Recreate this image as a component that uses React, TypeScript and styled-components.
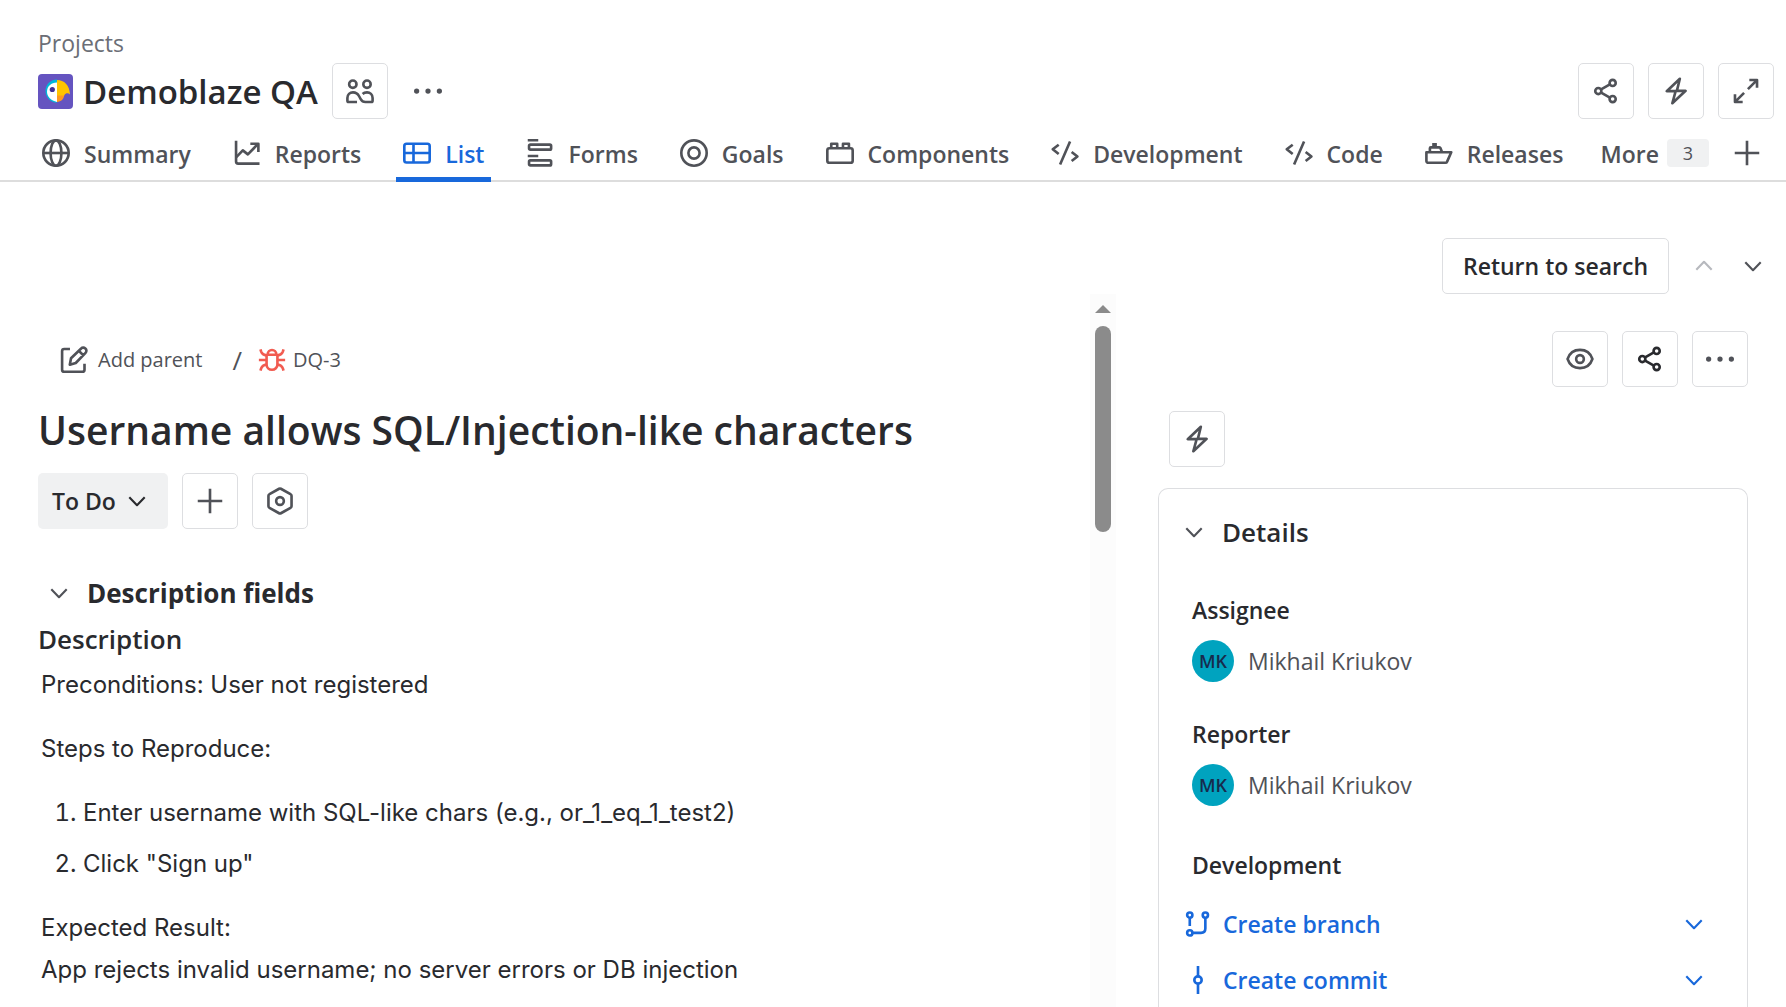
import React from "react";
import styled, { createGlobalStyle } from "styled-components";

const GlobalStyle = createGlobalStyle`
  *, *::before, *::after { box-sizing: border-box; }
  html, body, #root { height: 100%; }
  body {
    margin: 0;
    overflow: hidden;
    background: #fff;
    color: #292a2e;
    font-family: "Open Sans", "Noto Sans", sans-serif;
    font-size: 23px;
    line-height: 36px;
  }
  button { font: inherit; color: inherit; cursor: pointer; }
  h1, h2, h3, p, ol, dl, dd, dt { margin: 0; padding: 0; }
`;

const ink = "#292a2e";
const subtle = "#505258";
const line = "#dddee1";
const blue = "#1868db";

const Page = styled.div`
  display: flex;
  flex-direction: column;
  height: 100%;
`;

const Header = styled.header`
  display: flex;
  flex-direction: column;
  padding-top: 26px;
  border-bottom: 2px solid #dddddd;
`;

const Breadcrumb = styled.a`
  align-self: flex-start;
  margin-left: 38px;
  color: #6b6e76;
  line-height: 35px;
  text-decoration: none;
`;

const TitleRow = styled.div`
  display: flex;
  align-items: center;
  gap: 10px;
  margin-top: 2px;
  padding: 0 12px 0 38px;
`;

const ProjectName = styled.h1`
  padding: 2px 4px 0 0;
  font-size: 33px;
  font-weight: 600;
  line-height: 42px;
`;

const Group = styled.div<{ $push?: boolean; $tight?: boolean }>`
  display: flex;
  align-items: center;
  gap: ${(p) => (p.$tight ? "12px" : "14px")};
  margin-left: ${(p) => (p.$push ? "auto" : "0")};
`;

const IconButton = styled.button<{ $plain?: boolean; $dark?: boolean }>`
  display: grid;
  place-items: center;
  width: 56px;
  height: 56px;
  padding: 0;
  border: 1px solid ${(p) => (p.$plain ? "transparent" : line)};
  border-radius: 5px;
  background: transparent;
  color: ${(p) => (p.$dark ? ink : subtle)};
`;

const Tabs = styled.nav`
  display: flex;
  gap: 28px;
  padding: 0 25px 0 35px;
  margin-bottom: -2px;
`;

const Tab = styled.a<{ $active?: boolean }>`
  display: flex;
  align-items: center;
  gap: 14px;
  height: 63px;
  padding: 9px 7px 0;
  border-bottom: 5px solid ${(p) => (p.$active ? blue : "transparent")};
  color: ${(p) => (p.$active ? blue : subtle)};
  font-weight: 600;
  text-decoration: none;
  white-space: nowrap;
`;

const TabLabel = styled.span`
  padding-top: 2px;
`;

const MoreTab = styled.button`
  display: flex;
  align-items: center;
  gap: 8px;
  height: 63px;
  margin-left: auto;
  padding: 9px 0 5px;
  border: 0;
  background: none;
  color: ${subtle};
  font-weight: 600;
`;

const Count = styled.span`
  width: 42px;
  border-radius: 4px;
  background: #f0f1f2;
  font-size: 18px;
  font-weight: 400;
  line-height: 28px;
  text-align: center;
`;

const AddTab = styled.button`
  display: flex;
  align-items: center;
  height: 63px;
  margin-left: -4px;
  padding: 9px 0 5px;
  border: 0;
  background: none;
  color: ${subtle};
`;

const SearchBar = styled.div`
  display: flex;
  justify-content: flex-end;
  gap: 14px;
  padding: 56px 12px 0;
`;

const ReturnButton = styled.button`
  height: 56px;
  padding: 0 20px;
  border: 1px solid ${line};
  border-radius: 5px;
  background: #fff;
  font-weight: 600;
`;

const Pager = styled.div`
  display: flex;
  align-items: center;
  gap: 7px;
`;

const PagerButton = styled.button`
  display: grid;
  place-items: center;
  width: 42px;
  height: 42px;
  padding: 0;
  border: 0;
  background: none;
  color: ${subtle};
  &:disabled { color: #b7b9be; }
`;

const Main = styled.main`
  display: grid;
  grid-template-columns: minmax(0, 1090fr) 26px minmax(0, 670fr);
  flex: 1;
  min-height: 0;
`;

const Issue = styled.section`
  padding: 47px 38px 0;
  overflow: hidden;
`;

const IssuePath = styled.div`
  display: flex;
  align-items: center;
  height: 38px;
  padding-left: 22px;
  color: ${subtle};
  font-size: 20px;
`;

const PathLink = styled.a`
  display: flex;
  align-items: center;
  gap: 10px;
  color: inherit;
  text-decoration: none;
`;

const KeyLink = styled(PathLink)`
  gap: 7px;
`;

const Slash = styled.span`
  padding: 0 16px 0 30px;
  font-size: 26px;
`;

const IssueTitle = styled.h2`
  margin-top: 23px;
  font-size: 39px;
  font-weight: 600;
  line-height: 56px;
  white-space: nowrap;
`;

const Actions = styled.div`
  display: flex;
  gap: 14px;
  margin-top: 15px;
`;

const StatusButton = styled.button`
  display: flex;
  align-items: center;
  gap: 7px;
  height: 56px;
  padding: 0 17px 0 14px;
  border: 0;
  border-radius: 5px;
  background: #f0f1f2;
  color: ${ink};
  font-weight: 600;
`;

const Disclosure = styled.h3<{ $strong?: boolean }>`
  display: flex;
  align-items: center;
  font-size: 26px;
  font-weight: ${(p) => (p.$strong ? 700 : 600)};
  line-height: 42px;
`;

const DisclosureToggle = styled.button`
  display: grid;
  place-items: center;
  width: 42px;
  height: 42px;
  margin-right: 7px;
  padding: 0;
  border: 0;
  background: none;
  color: ${subtle};
`;

const DescriptionFields = styled.div`
  margin-top: 43px;
`;

const FieldHeading = styled.h3`
  margin-top: 4px;
  font-size: 26px;
  font-weight: 600;
  line-height: 42px;
`;

const RichText = styled.div`
  display: flex;
  flex-direction: column;
  gap: 22px;
  margin-top: 4px;
  padding-left: 3px;
  font-family: Inter, "Noto Sans", sans-serif;
  font-size: 24px;
  line-height: 42px;
`;

const Steps = styled.ol`
  display: flex;
  flex-direction: column;
  gap: 9px;
  && { padding-left: 42px; }
`;

const ScrollTrack = styled.div`
  display: flex;
  flex-direction: column;
  align-items: center;
  gap: 13px;
  padding-top: 11px;
  background: #fcfcfc;
`;

const ScrollArrow = styled.span`
  border: 8px solid transparent;
  border-top: 0;
  border-bottom: 8px solid #8b8b8b;
`;

const ScrollThumb = styled.span`
  width: 16px;
  height: 206px;
  border-radius: 8px;
  background: #8b8b8b;
`;

const Sidebar = styled.aside`
  display: flex;
  flex-direction: column;
  padding: 37px 38px 0 42px;
  overflow: hidden;
`;

const SidebarTools = styled(Group)`
  justify-content: flex-end;
`;

const Automation = styled.div`
  margin-top: 24px;
  padding-left: 11px;
`;

const Card = styled.section`
  flex: 1;
  margin-top: 21px;
  padding: 22px 32px 0 14px;
  border: 1px solid ${line};
  border-bottom: 0;
  border-radius: 10px 10px 0 0;
`;

const Fields = styled.dl`
  padding: 40px 0 0 19px;
  dt {
    font-weight: 600;
    line-height: 35px;
  }
`;

const Person = styled.dd`
  display: flex;
  align-items: center;
  gap: 14px;
  margin: 12px 0 35px;
  color: ${subtle};
  line-height: 42px;
`;

const Initials = styled.span`
  width: 42px;
  height: 42px;
  border-radius: 50%;
  background: #00a3bf;
  color: #172b4d;
  font-size: 18px;
  font-weight: 600;
  line-height: 42px;
  text-align: center;
`;

const DevTerm = styled.dt`
  padding-top: 7px;
`;

const DevList = styled.div`
  margin-top: 13px;
`;

const DevRow = styled.dd`
  display: flex;
  align-items: center;
  justify-content: space-between;
  height: 56px;
  margin-left: -8px;
  color: ${blue};
`;

const DevLink = styled.a`
  display: flex;
  align-items: center;
  gap: 11px;
  color: inherit;
  font-weight: 600;
  text-decoration: none;
`;

const DevToggle = styled(PagerButton)`
  color: inherit;
`;

const Svg = styled.svg`
  display: block;
  flex: none;
  overflow: visible;
`;

const shapes = {
  globe: (
    <>
      <circle cx="8" cy="8" r="7.25" />
      <ellipse cx="8" cy="8" rx="3.1" ry="7.25" />
      <path d="M.75 8h14.5" />
    </>
  ),
  reports: (
    <>
      <path d="M1.75 1v11.9c0 .7.5 1.2 1.2 1.2h12.2" />
      <path d="M1.9 10.4l3.7-3.9 2.9 2.3 5.8-6" />
      <path d="M9.9 2.7h4.6v4.7" />
    </>
  ),
  list: (
    <>
      <rect x=".75" y="2.7" width="14.5" height="10.7" rx="1.3" />
      <path d="M.75 8h14.5M6 2.7v10.7" />
    </>
  ),
  forms: (
    <>
      <path d="M1 .7h6M1 9.7h6" />
      <rect x="1.75" y="3.2" width="12.6" height="2.9" rx=".7" />
      <rect x="1.75" y="12.2" width="12.6" height="2.9" rx=".7" />
    </>
  ),
  goals: (
    <>
      <circle cx="8" cy="8" r="7.25" />
      <circle cx="8" cy="8" r="3.2" />
    </>
  ),
  components: (
    <>
      <rect x=".75" y="5.3" width="14.5" height="8.3" rx="1.2" />
      <path d="M3 5V2.7h3.4V5M9.7 5V2.7h3.4V5" />
    </>
  ),
  code: (
    <path d="M4.4 3.3L1 5.9l3.4 2.7M10.9 1.4L5.2 14.6M11.8 7.4l3.3 2.6-3.3 2.6" />
  ),
  releases: (
    <>
      <path d="M.8 7.6h14.2l-2.3 5.2c-.2.5-.6.8-1.1.8H1.9c-.6 0-1.1-.5-1.1-1.1z" />
      <path d="M2.8 7.4V5.3c0-.3.2-.5.5-.5h4.9c.3 0 .5.1.6.4l.9 2.2" />
      <path d="M4.1 4.5V2.3h2.7v2.2z" fill="currentColor" stroke="none" />
    </>
  ),
  plus: <path d="M8 1v14M1 8h14" />,
  share: (
    <>
      <circle cx="11.8" cy="3.4" r="1.75" />
      <circle cx="3.6" cy="8" r="1.75" />
      <circle cx="11.8" cy="12.6" r="1.75" />
      <path d="M5.2 7.1l5-2.9M5.2 8.9l5 2.9" />
    </>
  ),
  bolt: <path d="M10.2 1L2.7 8.1h5.1L5.9 15l7.6-7.1H8.5z" />,
  expand: (
    <>
      <path d="M9.1 6.9l5-5M9.9 1.7h4.4v4.5" />
      <path d="M6.9 9.1l-5 5M6.1 14.3H1.7V9.8" />
    </>
  ),
  people: (
    <>
      <circle cx="3.9" cy="4.1" r="2.1" />
      <circle cx="12" cy="4.1" r="2.1" />
      <path d="M6.3 14.25H1.5c-.4 0-.7-.3-.7-.7V12c0-1.9 1.4-3.2 3.2-3.2 1.9 0 2.8.9 3.5 2.2l.9 1.6c.6 1.1 1.4 1.65 2.7 1.65h3.4c.4 0 .7-.3.7-.7V12c0-1.9-1.4-3.2-3.2-3.2-1.1 0-1.9.3-2.5.9" />
    </>
  ),
  more: (
    <g fill="currentColor" stroke="none">
      <circle cx="1.5" cy="8" r="1.5" />
      <circle cx="8" cy="8" r="1.5" />
      <circle cx="14.5" cy="8" r="1.5" />
    </g>
  ),
  eye: (
    <>
      <path d="M.9 8C2 4.7 4.7 2.8 8 2.8S14 4.7 15.1 8C14 11.3 11.3 13.2 8 13.2S2 11.3.9 8z" />
      <circle cx="8" cy="8" r="2.2" />
    </>
  ),
  hexagon: (
    <>
      <path d="M8.5 1L14 4.1c.4.2.6.5.6.9v6c0 .4-.2.7-.6.9L8.5 15a1 1 0 0 1-1 0L2 11.9c-.4-.2-.6-.5-.6-.9V5c0-.4.2-.7.6-.9L7.5 1a1 1 0 0 1 1 0z" />
      <circle cx="8" cy="8" r="2.2" />
    </>
  ),
  edit: (
    <>
      <path d="M5.7 1.7H2.4c-.7 0-1.2.5-1.2 1.2v10.6c0 .7.5 1.2 1.2 1.2h10.4c.7 0 1.2-.5 1.2-1.2v-3.4" />
      <path d="M5.6 10.7l.7-3.7 5.8-5.6a1.6 1.6 0 0 1 2.3 0l.2.2a1.6 1.6 0 0 1 0 2.3L9 9.7zM10.8 2.8l2.5 2.5" />
    </>
  ),
  bug: (
    <>
      <path d="M4.9 5h6.2v5.5a3.1 3.1 0 0 1-6.2 0zM5.5 5c0-3.6 5-3.6 5 0" />
      <path d="M1.4 1.9l.4 1.3c.4 1.2 1.5 2 3.1 2.2M14.6 1.9l-.4 1.3c-.4 1.2-1.5 2-3.1 2.2M.5 8h4.4M11.1 8h4.4M1.4 14.1l.4-1.3c.4-1.2 1.5-2 3.1-2.2M14.6 14.1l-.4-1.3c-.4-1.2-1.5-2-3.1-2.2" />
    </>
  ),
  branch: (
    <>
      <circle cx="3.3" cy="2.9" r="1.5" />
      <circle cx="12.2" cy="2.9" r="1.5" />
      <circle cx="3.3" cy="13.1" r="1.5" />
      <path d="M3.3 4.6v4.5M12.2 4.6v6c0 1.5-1 2.5-2.5 2.5H5" />
    </>
  ),
  commit: (
    <>
      <circle cx="8" cy="8" r="2.1" />
      <path d="M8 0v5.9M8 10.1V16" />
    </>
  ),
  down: <path d="M3.6 5.8L8 10.4l4.4-4.6" strokeWidth="1.2" />,
  up: <path d="M3.6 10.2L8 5.6l4.4 4.6" strokeWidth="1.2" />,
};

type IconName = keyof typeof shapes;

const Icon = ({ name, color = "currentColor" }: { name: IconName; color?: string }) => (
  <Svg width="28" height="28" viewBox="0 0 16 16" fill="none" stroke={color} strokeWidth="1.5" strokeLinejoin="round" aria-hidden="true">
    {shapes[name]}
  </Svg>
);

const ProjectAvatar = () => (
  <Svg width="35" height="35" viewBox="0 0 35 35" aria-hidden="true">
    <rect width="35" height="35" rx="4" fill="#6554c0" />
    <path d="M19 5.5a11.5 11.5 0 1 0 0 23z" fill="#00b8d9" />
    <path d="M19 8.500c-6 0-10 4-10 9.300 0 5.200 4 8.700 10 10.200z" fill="#fff" />
    <path d="M19 6c7 0 12.700 5 13 14.500-1-1.200-2.200-1.600-3.500-1.200-1.200.4-2 1.300-2.500 2.700H19z" fill="#ffc400" />
    <path d="M19 21.500h7.200c-.5 3.500-3 6-7.200 6.500z" fill="#ff991f" />
    <circle cx="14.3" cy="15.5" r="2.6" fill="#403294" />
  </Svg>
);

const tabs: { icon: IconName; label: string }[] = [
  { icon: "globe", label: "Summary" },
  { icon: "reports", label: "Reports" },
  { icon: "list", label: "List" },
  { icon: "forms", label: "Forms" },
  { icon: "goals", label: "Goals" },
  { icon: "components", label: "Components" },
  { icon: "code", label: "Development" },
  { icon: "code", label: "Code" },
  { icon: "releases", label: "Releases" },
];

const people = [
  { role: "Assignee", name: "Mikhail Kriukov", initials: "MK" },
  { role: "Reporter", name: "Mikhail Kriukov", initials: "MK" },
];

const devActions: { icon: IconName; label: string }[] = [
  { icon: "branch", label: "Create branch" },
  { icon: "commit", label: "Create commit" },
];

export default function App() {
  return (
    <Page>
      <GlobalStyle />
      <Header>
        <Breadcrumb href="#projects">Projects</Breadcrumb>
        <TitleRow>
          <ProjectAvatar />
          <ProjectName>Demoblaze QA</ProjectName>
          <Group $tight>
            <IconButton aria-label="Team">
              <Icon name="people" />
            </IconButton>
            <IconButton $plain aria-label="More project actions">
              <Icon name="more" />
            </IconButton>
          </Group>
          <Group $push>
            <IconButton aria-label="Share project">
              <Icon name="share" />
            </IconButton>
            <IconButton aria-label="Project automation">
              <Icon name="bolt" />
            </IconButton>
            <IconButton aria-label="Full screen">
              <Icon name="expand" />
            </IconButton>
          </Group>
        </TitleRow>
        <Tabs>
          {tabs.map((t) => (
            <Tab key={t.label} href={"#" + t.label.toLowerCase()} $active={t.label === "List"}>
              <Icon name={t.icon} />
              <TabLabel>{t.label}</TabLabel>
            </Tab>
          ))}
          <MoreTab>
            <TabLabel>More</TabLabel>
            <Count>3</Count>
          </MoreTab>
          <AddTab aria-label="Add tab">
            <Icon name="plus" />
          </AddTab>
        </Tabs>
      </Header>

      <SearchBar>
        <ReturnButton>Return to search</ReturnButton>
        <Pager>
          <PagerButton disabled aria-label="Previous item">
            <Icon name="up" />
          </PagerButton>
          <PagerButton aria-label="Next item">
            <Icon name="down" />
          </PagerButton>
        </Pager>
      </SearchBar>

      <Main>
        <Issue>
          <IssuePath>
            <PathLink href="#parent">
              <Icon name="edit" />
              Add parent
            </PathLink>
            <Slash>/</Slash>
            <KeyLink href="#DQ-3">
              <Icon name="bug" color="#f15b50" />
              DQ-3
            </KeyLink>
          </IssuePath>
          <IssueTitle>Username allows SQL/Injection-like characters</IssueTitle>
          <Actions>
            <StatusButton>
              To Do
              <Icon name="down" />
            </StatusButton>
            <IconButton aria-label="Add">
              <Icon name="plus" />
            </IconButton>
            <IconButton aria-label="Apps">
              <Icon name="hexagon" />
            </IconButton>
          </Actions>

          <DescriptionFields>
            <Disclosure $strong>
              <DisclosureToggle aria-label="Collapse description fields">
                <Icon name="down" />
              </DisclosureToggle>
              Description fields
            </Disclosure>
            <FieldHeading>Description</FieldHeading>
            <RichText>
              <p>Preconditions: User not registered</p>
              <p>Steps to Reproduce:</p>
              <Steps>
                <li>Enter username with SQL-like chars (e.g., or_1_eq_1_test2)</li>
                <li>Click "Sign up"</li>
              </Steps>
              <p>
                Expected Result:
                <br />
                App rejects invalid username; no server errors or DB injection
              </p>
            </RichText>
          </DescriptionFields>
        </Issue>

        <ScrollTrack aria-hidden="true">
          <ScrollArrow />
          <ScrollThumb />
        </ScrollTrack>

        <Sidebar>
          <SidebarTools>
            <IconButton aria-label="Watch">
              <Icon name="eye" />
            </IconButton>
            <IconButton $dark aria-label="Share">
              <Icon name="share" />
            </IconButton>
            <IconButton aria-label="More actions">
              <Icon name="more" />
            </IconButton>
          </SidebarTools>
          <Automation>
            <IconButton aria-label="Automation">
              <Icon name="bolt" />
            </IconButton>
          </Automation>
          <Card>
            <Disclosure>
              <DisclosureToggle aria-label="Collapse details">
                <Icon name="down" />
              </DisclosureToggle>
              Details
            </Disclosure>
            <Fields>
              {people.map((p) => (
                <React.Fragment key={p.role}>
                  <dt>{p.role}</dt>
                  <Person>
                    <Initials>{p.initials}</Initials>
                    {p.name}
                  </Person>
                </React.Fragment>
              ))}
              <DevTerm>Development</DevTerm>
              <DevList>
                {devActions.map((d) => (
                  <DevRow key={d.label}>
                    <DevLink href={"#" + d.icon}>
                      <Icon name={d.icon} />
                      {d.label}
                    </DevLink>
                    <DevToggle aria-label={d.label + " options"}>
                      <Icon name="down" />
                    </DevToggle>
                  </DevRow>
                ))}
              </DevList>
            </Fields>
          </Card>
        </Sidebar>
      </Main>
    </Page>
  );
}
